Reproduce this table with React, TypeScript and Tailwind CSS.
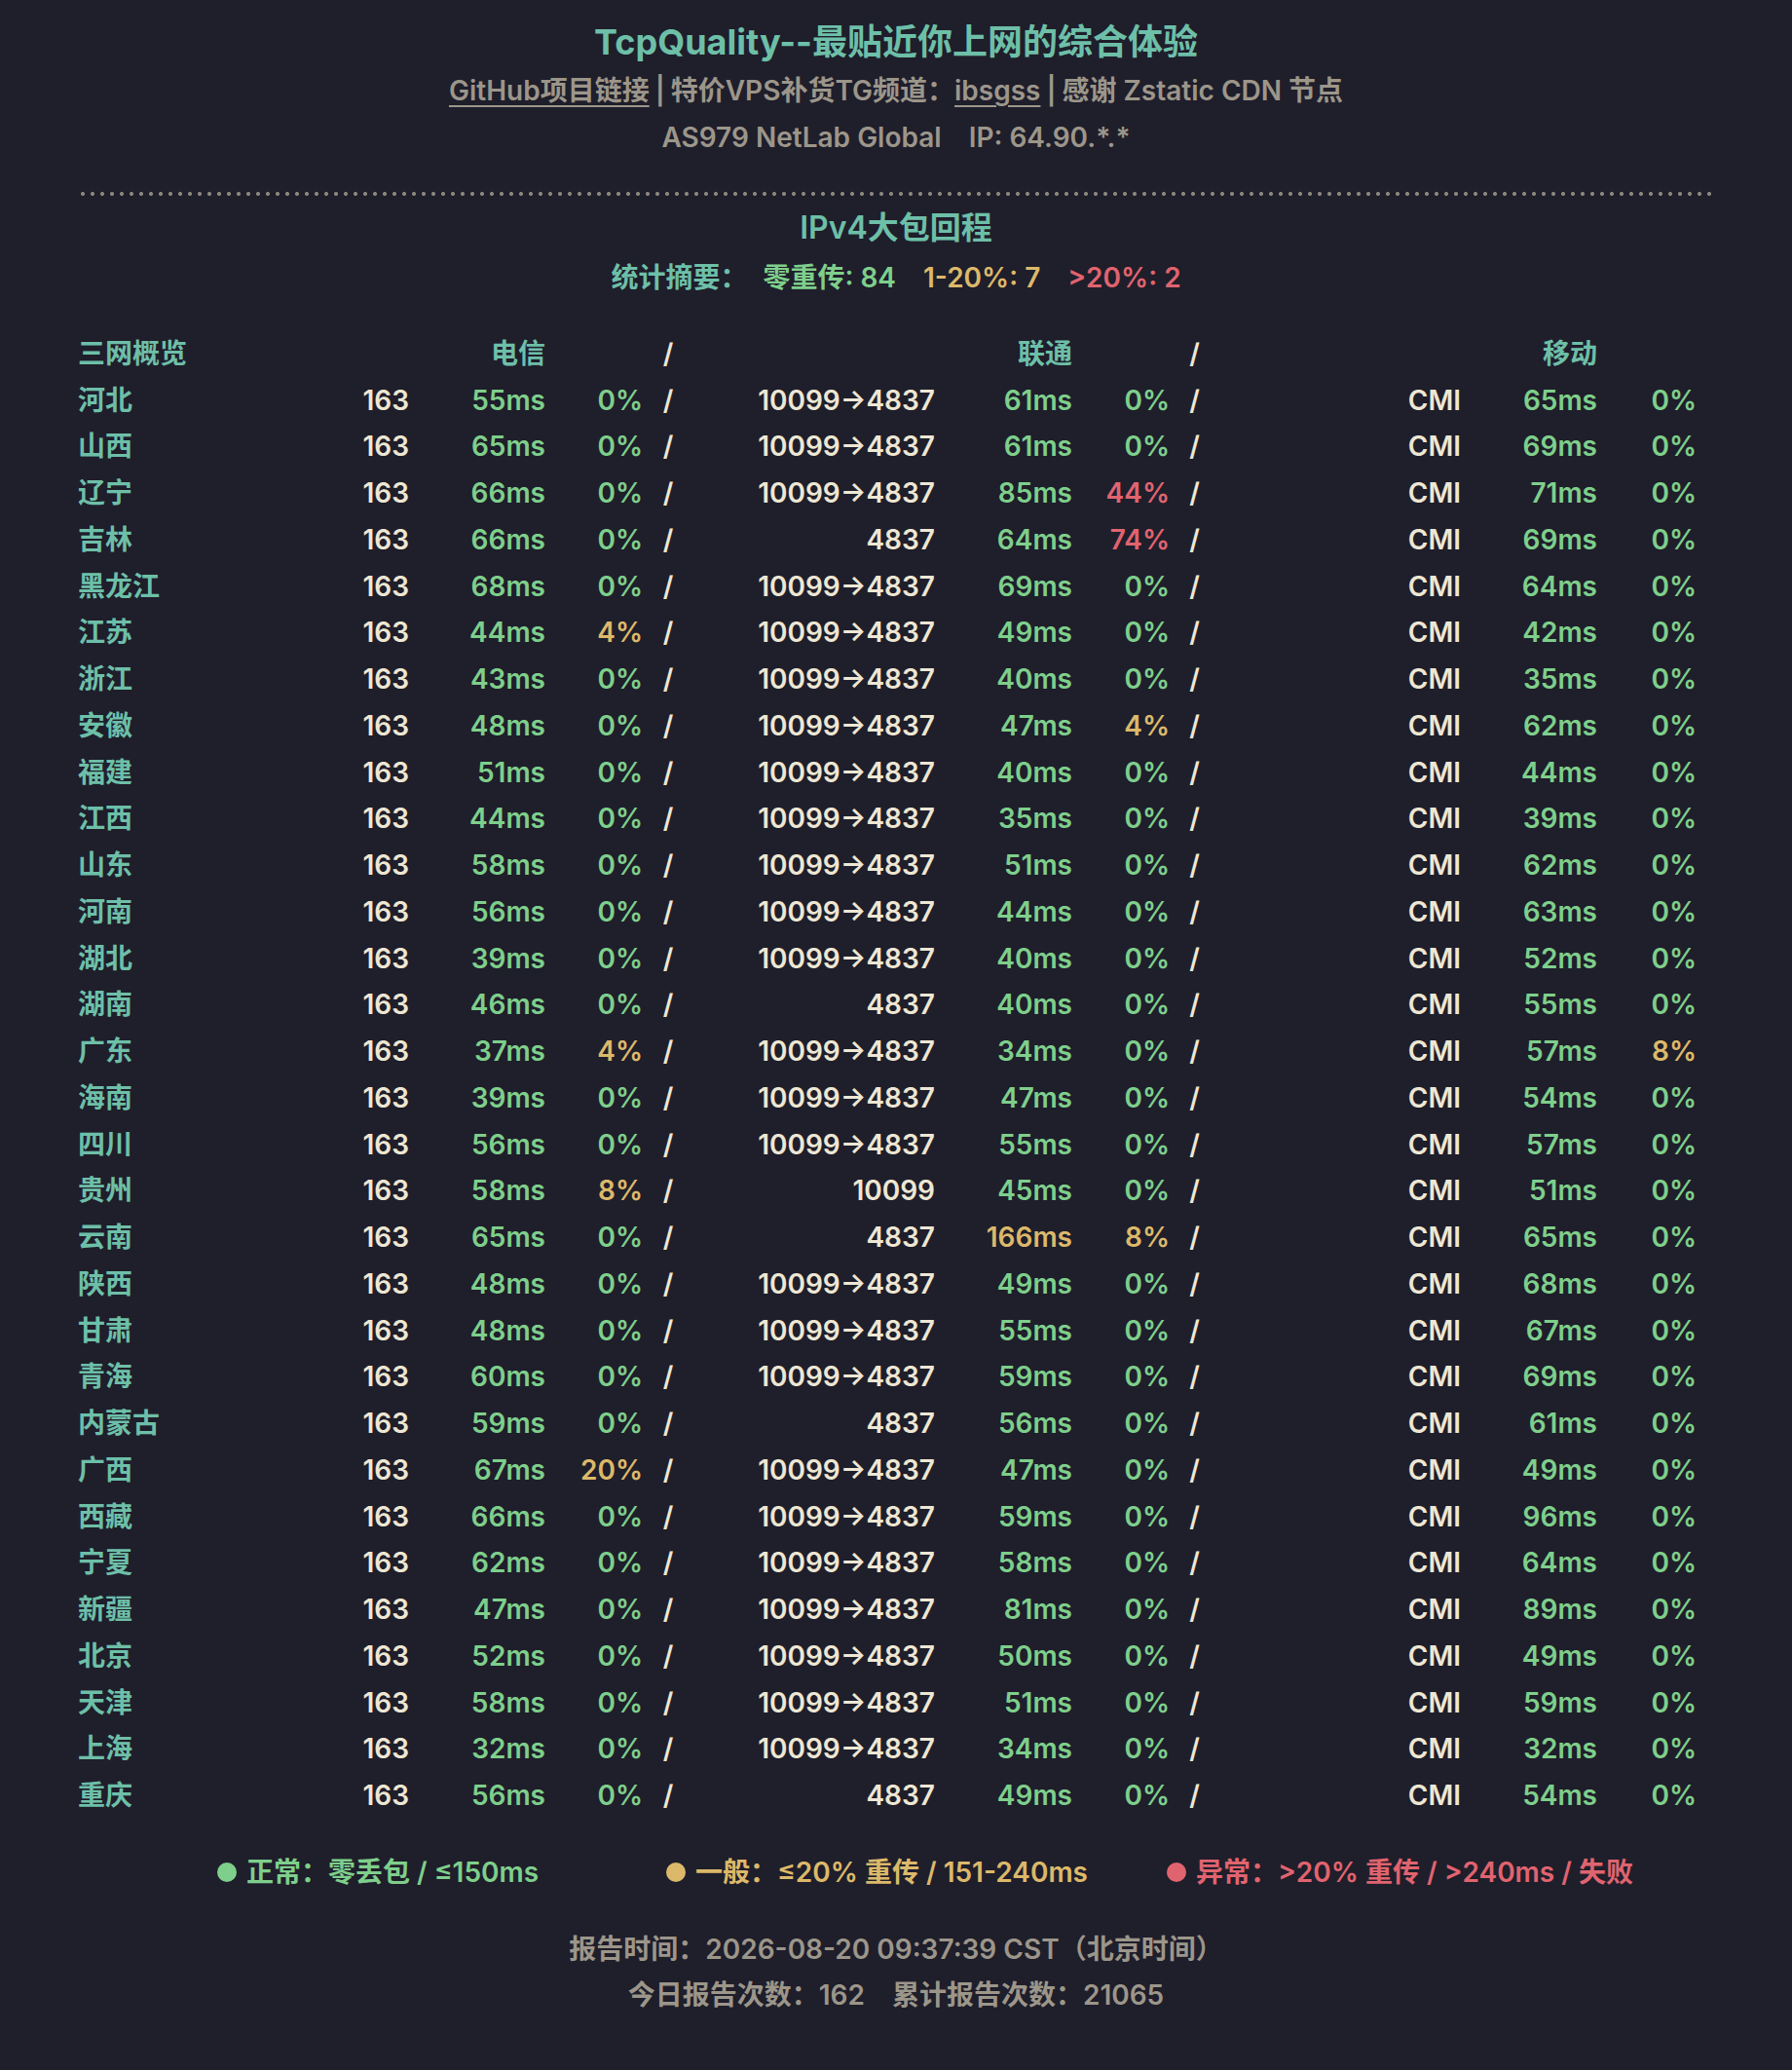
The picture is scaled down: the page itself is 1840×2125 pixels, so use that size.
import React from "react";

type Row = [string, number, number, number, string, number, number, number, number];

// 省份, 电信ms, 电信%, ..., 联通路由, 联通ms, 联通%, 移动ms, 移动%
const rows: Row[] = [
  ["河北", 163, 55, 0, "10099→4837", 61, 0, 65, 0],
  ["山西", 163, 65, 0, "10099→4837", 61, 0, 69, 0],
  ["辽宁", 163, 66, 0, "10099→4837", 85, 44, 71, 0],
  ["吉林", 163, 66, 0, "4837", 64, 74, 69, 0],
  ["黑龙江", 163, 68, 0, "10099→4837", 69, 0, 64, 0],
  ["江苏", 163, 44, 4, "10099→4837", 49, 0, 42, 0],
  ["浙江", 163, 43, 0, "10099→4837", 40, 0, 35, 0],
  ["安徽", 163, 48, 0, "10099→4837", 47, 4, 62, 0],
  ["福建", 163, 51, 0, "10099→4837", 40, 0, 44, 0],
  ["江西", 163, 44, 0, "10099→4837", 35, 0, 39, 0],
  ["山东", 163, 58, 0, "10099→4837", 51, 0, 62, 0],
  ["河南", 163, 56, 0, "10099→4837", 44, 0, 63, 0],
  ["湖北", 163, 39, 0, "10099→4837", 40, 0, 52, 0],
  ["湖南", 163, 46, 0, "4837", 40, 0, 55, 0],
  ["广东", 163, 37, 4, "10099→4837", 34, 0, 57, 8],
  ["海南", 163, 39, 0, "10099→4837", 47, 0, 54, 0],
  ["四川", 163, 56, 0, "10099→4837", 55, 0, 57, 0],
  ["贵州", 163, 58, 8, "10099", 45, 0, 51, 0],
  ["云南", 163, 65, 0, "4837", 166, 8, 65, 0],
  ["陕西", 163, 48, 0, "10099→4837", 49, 0, 68, 0],
  ["甘肃", 163, 48, 0, "10099→4837", 55, 0, 67, 0],
  ["青海", 163, 60, 0, "10099→4837", 59, 0, 69, 0],
  ["内蒙古", 163, 59, 0, "4837", 56, 0, 61, 0],
  ["广西", 163, 67, 20, "10099→4837", 47, 0, 49, 0],
  ["西藏", 163, 66, 0, "10099→4837", 59, 0, 96, 0],
  ["宁夏", 163, 62, 0, "10099→4837", 58, 0, 64, 0],
  ["新疆", 163, 47, 0, "10099→4837", 81, 0, 89, 0],
  ["北京", 163, 52, 0, "10099→4837", 50, 0, 49, 0],
  ["天津", 163, 58, 0, "10099→4837", 51, 0, 59, 0],
  ["上海", 163, 32, 0, "10099→4837", 34, 0, 32, 0],
  ["重庆", 163, 56, 0, "4837", 49, 0, 54, 0],
];

const msColor = (ms: number) =>
  ms > 240 ? "text-[#e0646f]" : ms > 150 ? "text-[#dcb96a]" : "text-[#7ecf8b]";
const lossColor = (p: number) =>
  p > 20 ? "text-[#e0646f]" : p > 0 ? "text-[#dcb96a]" : "text-[#7ecf8b]";

const grid =
  "grid grid-cols-[201px_139px_140px_100px_52px_248px_141px_100px_51px_248px_140px_102px] h-[47.75px] items-center";

export default function App() {
  return (
    <div className="min-h-screen bg-[#1f1e2b] font-['Inter','Noto_Sans_CJK_SC',sans-serif] pt-[19px] pb-[59px]">
      <div className="max-w-[1680px] mx-auto">
        {/* Header */}
        <h1 className="text-center text-[36px] leading-[48px] font-bold text-[#6dbfa8]">
          TcpQuality--最贴近你上网的综合体验
        </h1>
        <div className="mt-[2px] text-center text-[28px] leading-[48px] font-semibold text-[#9c968a]">
          <span className="underline underline-offset-[5px] decoration-2">GitHub项目链接</span>
          <span className="mx-1.5">|</span>
          特价VPS补货TG频道：<span className="underline underline-offset-[5px] decoration-2">ibsgss</span>
          <span className="mx-1.5">|</span>
          感谢 Zstatic CDN 节点
        </div>
        <div className="text-center text-[28px] leading-[48px] font-semibold text-[#9c968a]">
          AS979 NetLab Global<span className="ml-7">IP: 64.90.*.*</span>
        </div>

        <div className="mt-[32px] h-[4px] bg-[radial-gradient(circle,#8b857a_1.8px,transparent_2.3px)] bg-[length:10px_4px]" />

        <h2 className="mt-[13px] text-center text-[32px] leading-[40px] font-semibold text-[#6dbfa8]">
          IPv4大包回程
        </h2>
        <div className="mt-[11px] text-center text-[28px] leading-[40px] font-semibold">
          <span className="text-[#6dbfa8]">统计摘要：</span>
          <span className="ml-4 text-[#7ecf8b]">零重传: 84</span>
          <span className="ml-7 text-[#dcb96a]">1-20%: 7</span>
          <span className="ml-7 text-[#e0646f]">&gt;20%: 2</span>
        </div>

        {/* Table */}
        <div className="mt-[34px] text-[28px] font-semibold">
          <div className={grid}>
            <div className="text-[#6dbfa8]">三网概览</div>
            <div className="col-span-2 text-right text-[#6dbfa8]">电信</div>
            <div />
            <div className="text-center text-[#eee7d3]">/</div>
            <div className="col-span-2 text-right text-[#6dbfa8]">联通</div>
            <div />
            <div className="text-center text-[#eee7d3]">/</div>
            <div className="col-span-2 text-right text-[#6dbfa8]">移动</div>
            <div />
          </div>
          {rows.map((r) => (
            <div key={r[0]} className={grid}>
              <div className="text-[#6dbfa8]">{r[0]}</div>
              <div className="text-right text-[#eee7d3]">{r[1]}</div>
              <div className={`text-right ${msColor(r[2])}`}>{r[2]}ms</div>
              <div className={`text-right ${lossColor(r[3])}`}>{r[3]}%</div>
              <div className="text-center text-[#eee7d3]">/</div>
              <div className="text-right text-[#eee7d3]">{r[4]}</div>
              <div className={`text-right ${msColor(r[5])}`}>{r[5]}ms</div>
              <div className={`text-right ${lossColor(r[6])}`}>{r[6]}%</div>
              <div className="text-center text-[#eee7d3]">/</div>
              <div className="text-right text-[#eee7d3]">CMI</div>
              <div className={`text-right ${msColor(r[7])}`}>{r[7]}ms</div>
              <div className={`text-right ${lossColor(r[8])}`}>{r[8]}%</div>
            </div>
          ))}
        </div>

        {/* Legend */}
        <div className="mt-[35px] flex pl-[143px] text-[28px] leading-[40px] font-semibold">
          <div className="w-[461px] flex items-center gap-[10px] text-[#7ecf8b]">
            <span className="w-[20px] h-[20px] rounded-full bg-[#7ecf8b]" />
            正常：零丢包 / ≤150ms
          </div>
          <div className="w-[514px] flex items-center gap-[10px] text-[#dcb96a]">
            <span className="w-[20px] h-[20px] rounded-full bg-[#dcb96a]" />
            一般：≤20% 重传 / 151-240ms
          </div>
          <div className="flex items-center gap-[10px] text-[#e0646f]">
            <span className="w-[20px] h-[20px] rounded-full bg-[#e0646f]" />
            异常：&gt;20% 重传 / &gt;240ms / 失败
          </div>
        </div>

        {/* Footer */}
        <div className="mt-[39px] text-center text-[28px] leading-[40px] font-semibold text-[#9c968a]">
          报告时间：2026-08-20 09:37:39 CST（北京时间）
        </div>
        <div className="mt-[7px] text-center text-[28px] leading-[40px] font-semibold text-[#9c968a]">
          今日报告次数：162<span className="ml-7">累计报告次数：21065</span>
        </div>
      </div>
    </div>
  );
}
